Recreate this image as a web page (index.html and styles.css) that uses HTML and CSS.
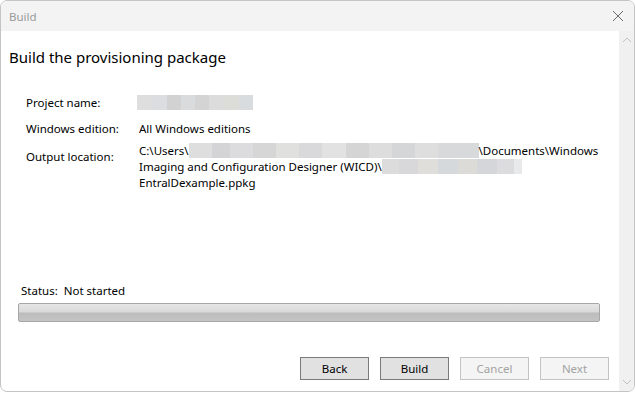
FILE: index.html
```html
<!DOCTYPE html>
<html lang="en">
<head>
    <meta charset="UTF-8">
    <title>Build</title>
    <link rel="stylesheet" href="styles.css">
</head>
<body>
    <div class="window">
        <div class="titlebar">
            <span class="caption">Build</span>
            <svg class="close" width="12" height="12" viewBox="0 0 12 12">
                <path d="M1 1 L11 11 M11 1 L1 11" stroke="#6b6b6b" stroke-width="1" fill="none"/>
            </svg>
        </div>

        <div class="client">
            <div class="page">
                <h1>Build the provisioning package</h1>

                <div class="info">
                    <div class="label">Project name:</div>
                    <div class="value"><span class="redact r-name"></span></div>

                    <div class="label">Windows edition:</div>
                    <div class="value">All Windows editions</div>

                    <div class="label label-low">Output location:</div>
                    <div class="value value-high">
                        C:\Users\<span class="redact r-user"></span>\Documents\Windows<br>
                        Imaging and Configuration Designer (WICD)\<span class="redact r-proj"></span><br>
                        EntralDexample.ppkg
                    </div>
                </div>

                <div class="status">
                    <span>Status:</span><span class="status-text">Not started</span>
                </div>
                <div class="progress"></div>

                <div class="buttons">
                    <button class="btn">Back</button>
                    <button class="btn">Build</button>
                    <button class="btn" disabled>Cancel</button>
                    <button class="btn" disabled>Next</button>
                </div>
            </div>

            <div class="scrollbar">
                <svg width="10" height="6" viewBox="0 0 10 6">
                    <path d="M1 5 L5 1 L9 5" stroke="#c2c2c2" fill="none"/>
                </svg>
                <svg width="10" height="6" viewBox="0 0 10 6">
                    <path d="M1 1 L5 5 L9 1" stroke="#c2c2c2" fill="none"/>
                </svg>
            </div>
        </div>
    </div>
</body>
</html>
```

FILE: styles.css
```css
* {
    margin: 0;
    padding: 0;
    box-sizing: border-box;
}

body {
    font-family: 'Noto Sans', sans-serif;
    font-size: 11.5px;
    color: #000;
    background-color: #fff;
    width: 636px;
    height: 393px;
    overflow: hidden;
}

.window {
    width: 635px;
    height: 392px;
    border: 1px solid #c4c4c4;
    border-radius: 7px;
    overflow: hidden;
    display: flex;
    flex-direction: column;
}

.titlebar {
    height: 30px;
    background-color: #f3f3f3;
    display: flex;
    align-items: center;
    justify-content: space-between;
    padding: 0 10px 0 8px;
    flex-shrink: 0;
}

.caption {
    color: #9a9a9a;
    font-size: 11.5px;
}

.client {
    flex: 1;
    display: flex;
}

.page {
    flex: 1;
    display: flex;
    flex-direction: column;
    padding: 0 0 11px 8px;
}

h1 {
    font-size: 15px;
    font-weight: normal;
    line-height: 20px;
    margin-top: 16px;
}

/* project details */
.info {
    display: grid;
    grid-template-columns: 113px 1fr;
    row-gap: 10px;
    margin: 28px 0 0 17px;
    line-height: 16px;
}

.label-low {
    padding-top: 2px;
}

.value-high {
    margin-top: -4px;
}

.redact {
    display: inline-block;
    height: 15px;
    vertical-align: -3px;
    background: linear-gradient(90deg,
        #dedede 0 12%, #dcdde0 12% 26%, #d2d2d2 26% 38%, #dadbdd 38% 50%,
        #d4d4d4 50% 62%, #dcdcdc 62% 74%, #dcdcd8 74% 88%, #d9dcdf 88% 100%);
}

.r-name {
    width: 116px;
    margin-left: -2px;
}

.r-user {
    width: 290px;
    background: linear-gradient(90deg,
        #dedede 0 8%, #d4d3d5 8% 14%, #dcdbdd 14% 22%, #d6d6d6 22% 30%,
        #e0e0de 30% 38%, #d9d9db 38% 46%, #e2e2e2 46% 54%, #d5d5d5 54% 62%,
        #dddddd 62% 70%, #d4d6d8 70% 78%, #dedede 78% 86%, #d8d9db 86% 100%);
}

.r-proj {
    width: 140px;
    background: linear-gradient(90deg,
        #dcdcdc 0 12%, #d8d8da 12% 26%, #e0dedb 26% 40%, #d6d9dc 40% 54%,
        #dcdbd8 54% 68%, #d5d6d9 68% 82%, #dcdcde 82% 94%, #e8e9ea 94% 100%);
}

/* status and progress */
.status {
    margin: auto 0 0 12px;
    line-height: 16px;
}

.status-text {
    margin-left: 6px;
}

.progress {
    width: 582px;
    height: 19px;
    margin: 4px 0 0 9px;
    border: 1px solid #a7a7a7;
    border-radius: 2px;
    background: linear-gradient(#e6e6e6 0, #d9d9d9 48%, #bcbcbc 52%, #c4c4c4 100%);
}

.buttons {
    display: flex;
    justify-content: flex-end;
    gap: 11px;
    margin-top: 35px;
    padding-right: 10px;
}

.btn {
    width: 69px;
    height: 23px;
    font-family: 'Noto Sans', sans-serif;
    font-size: 11.5px;
    color: #000;
    background-color: #e1e1e1;
    border: 1px solid #7a7a7a;
}

.btn:disabled {
    color: #a3a3a3;
    background-color: #f4f4f4;
    border-color: #c3c3c3;
}

.scrollbar {
    width: 15px;
    background-color: #f0f0f0;
    display: flex;
    flex-direction: column;
    justify-content: space-between;
    align-items: center;
    padding: 6px 0 6px;
}
```
